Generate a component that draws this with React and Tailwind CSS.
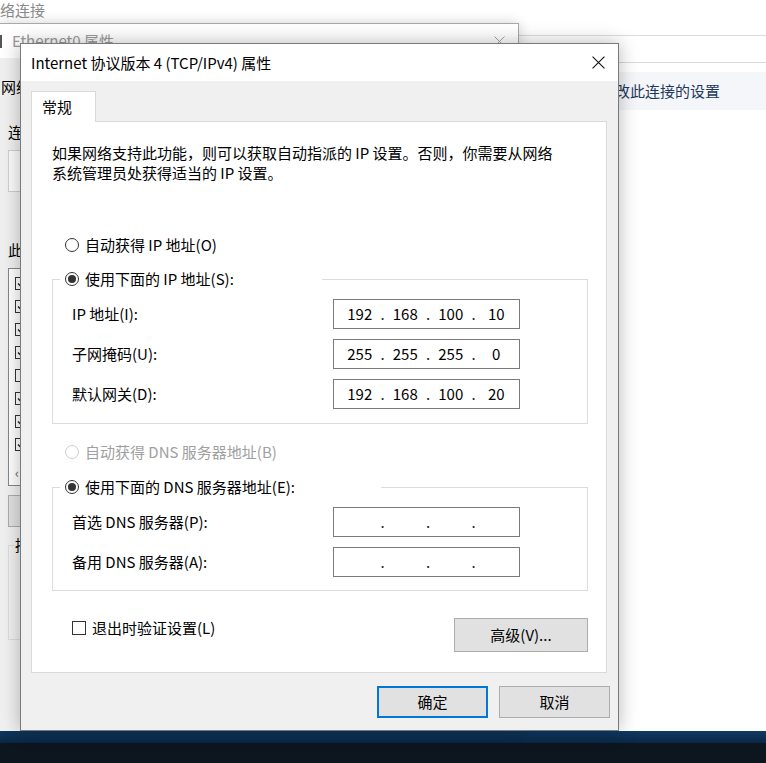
import React from "react";

function Radio({ checked, disabled }) {
  return (
    <span
      className={
        disabled
          ? "w-[14px] h-[14px] rounded-full border border-[#cccccc] bg-white flex items-center justify-center shrink-0"
          : "w-[14px] h-[14px] rounded-full border border-[#333333] bg-white flex items-center justify-center shrink-0"
      }
    >
      {checked && <span className="w-[8px] h-[8px] rounded-full bg-[#333333]" />}
    </span>
  );
}

function IpField({ parts }) {
  return (
    <div className="w-[187px] h-[30px] border border-[#7a7a7a] bg-white flex items-center pl-[3px] text-[15px] leading-[20px] text-black">
      {parts.map((p, i) => (
        <React.Fragment key={i}>
          {i > 0 && <span className="w-0 flex justify-center text-[#222222]">.</span>}
          <span className="w-[45.5px] text-center">{p}</span>
        </React.Fragment>
      ))}
    </div>
  );
}

function FieldRow({ label, parts }) {
  return (
    <div className="flex items-center h-[30px]">
      <span className="w-[261px]">{label}</span>
      <IpField parts={parts} />
    </div>
  );
}

function CloseX({ color, size }) {
  return (
    <svg width={size} height={size} viewBox="0 0 12 12" className="shrink-0">
      <path d="M0.5 0.5 L11.5 11.5 M11.5 0.5 L0.5 11.5" stroke={color} strokeWidth="1" fill="none" />
    </svg>
  );
}

function SmallCheck({ checked }) {
  return (
    <span className="w-[13px] h-[13px] border border-[#333333] bg-white flex items-center justify-center shrink-0">
      {checked && (
        <svg width="9" height="9" viewBox="0 0 9 9">
          <path d="M1 4.5 L3.5 7 L8 1.5" stroke="#222" strokeWidth="1.4" fill="none" />
        </svg>
      )}
    </span>
  );
}

export default function App() {
  const items = [true, true, true, true, false, true, true, true];
  return (
    <div className="w-[766px] h-[763px] overflow-hidden flex flex-col bg-white font-['Noto_Sans_CJK_SC','Noto_Sans',sans-serif] text-[15px] leading-[20px] text-black">
      {/* Desktop area */}
      <div className="relative h-[731px] bg-white">
        {/* Network connections window (background) */}
        <div className="absolute inset-0 flex flex-col bg-white">
          <div className="h-[36px] border-b border-[#dcdcdc]">
            <div className="ml-[-15px] text-[#8a8a8a]">网络连接</div>
          </div>
          <div className="h-[27px] border-b border-[#d9d9d9]" />
          <div className="mt-[9px] h-[38px] bg-[#f4f6f9] flex items-center">
            <span className="ml-[600px] text-[#1e395b]">更改此连接的设置</span>
          </div>
        </div>

        {/* Ethernet0 properties window (background) */}
        <div className="absolute left-0 top-[23px] w-[519px] h-[708px] border-t border-r border-[#a8a8a8] bg-[#f0f0f0] shadow-[0_0_12px_rgba(0,0,0,0.18)] flex flex-col">
          <div className="h-[34px] bg-white flex items-center">
            <span className="w-[2px] h-[13px] bg-[#555555] mr-[10px]" />
            <span className="text-[#999999]">Ethernet0 属性</span>
            <span className="ml-auto mr-[13px] flex">
              <CloseX color="#9a9a9a" size={11} />
            </span>
          </div>
          <div className="flex flex-col pl-[8px]">
            <div className="mt-[19px] ml-[-7px]">网络</div>
            <div className="mt-[25px]">连接时使用:</div>
            <div className="mt-[8px] h-[42px] w-[300px] border border-[#cfcfcf] bg-[#fbfbfb]" />
            <div className="mt-[48px]">此连接使用下列项目(O):</div>
            <div className="mt-[8px] h-[218px] w-[300px] border border-[#828790] bg-white flex flex-col pt-[3px] pl-[6px]">
              {items.map((c, i) => (
                <div key={i} className="h-[23px] flex items-center">
                  <SmallCheck checked={c} />
                </div>
              ))}
              <div className="mt-auto mb-[5px] text-[#606060] text-[13px] leading-[14px]">‹</div>
            </div>
            <div className="mt-[9px] h-[32px] w-[100px] border border-[#adadad] bg-[#e1e1e1]" />
            <div className="relative mt-[18px] h-[95px] w-[300px] border border-[#dcdcdc]">
              <span className="absolute left-[5px] top-[-11px] bg-[#f0f0f0] px-[1px]">描述</span>
            </div>
          </div>
        </div>

        {/* IPv4 properties dialog */}
        <div className="absolute left-[20px] top-[43px] w-[599px] h-[688px] border border-[#7a7a7a] bg-[#f0f0f0] shadow-[0_0_18px_rgba(0,0,0,0.28)] flex flex-col">
          {/* Title bar */}
          <div className="h-[37px] bg-white flex items-center pl-[10px]">
            <span>Internet 协议版本 4 (TCP/IPv4) 属性</span>
            <span className="ml-auto mr-[13px] flex">
              <CloseX color="#111111" size={13} />
            </span>
          </div>

          {/* Body */}
          <div className="flex flex-col pt-[10px] pl-[10px] pr-[8px]">
            {/* Tab */}
            <div className="relative z-10 -mb-[1px] w-[65px] h-[31px] bg-white border-t border-l border-r border-[#d9d9d9] flex items-center pl-[10px]">
              常规
            </div>

            {/* Panel */}
            <div className="w-[576px] border border-[#d9d9d9] bg-white flex flex-col pt-[21px] pb-[20px]">
              <div className="pl-[20px]">
                <div>如果网络支持此功能，则可以获取自动指派的 IP 设置。否则，你需要从网络</div>
                <div>系统管理员处获得适当的 IP 设置。</div>
              </div>

              <div className="mt-[52px] ml-[33px] flex items-center gap-[6px] h-[20px]">
                <Radio checked={false} />
                <span>自动获得 IP 地址(O)</span>
              </div>

              {/* Group 1 */}
              <div className="relative mt-[24px] ml-[20px] w-[536px] border border-[#dcdcdc] pt-[19px] pb-[14px] pl-[19px] flex flex-col gap-[10px]">
                <div className="absolute left-[7px] top-[-11px] w-[262px] h-[20px] bg-white flex items-center gap-[6px] pl-[5px]">
                  <Radio checked />
                  <span>使用下面的 IP 地址(S):</span>
                </div>
                <FieldRow label="IP 地址(I):" parts={["192", "168", "100", "10"]} />
                <FieldRow label="子网掩码(U):" parts={["255", "255", "255", "0"]} />
                <FieldRow label="默认网关(D):" parts={["192", "168", "100", "20"]} />
              </div>

              <div className="mt-[18px] ml-[33px] flex items-center gap-[6px] h-[20px]">
                <Radio checked={false} disabled />
                <span className="text-[#a0a0a0]">自动获得 DNS 服务器地址(B)</span>
              </div>

              {/* Group 2 */}
              <div className="relative mt-[25px] ml-[20px] w-[536px] border border-[#dcdcdc] pt-[19px] pb-[13px] pl-[19px] flex flex-col gap-[10px]">
                <div className="absolute left-[7px] top-[-11px] w-[321px] h-[20px] bg-white flex items-center gap-[6px] pl-[5px]">
                  <Radio checked />
                  <span>使用下面的 DNS 服务器地址(E):</span>
                </div>
                <FieldRow label="首选 DNS 服务器(P):" parts={["", "", "", ""]} />
                <FieldRow label="备用 DNS 服务器(A):" parts={["", "", "", ""]} />
              </div>

              {/* Bottom row */}
              <div className="mt-[27px] pl-[40px] pr-[18px] flex items-start justify-between">
                <div className="flex items-center gap-[6px] h-[20px]">
                  <span className="w-[14px] h-[14px] border border-[#333333] bg-white shrink-0" />
                  <span>退出时验证设置(L)</span>
                </div>
                <div className="w-[134px] h-[34px] border border-[#adadad] bg-[#e1e1e1] flex items-center justify-center">
                  高级(V)...
                </div>
              </div>
            </div>

            {/* OK / Cancel */}
            <div className="mt-[13px] flex justify-end gap-[11px]">
              <div className="w-[111px] h-[32px] border-2 border-[#0078d7] bg-[#e1e1e1] flex items-center justify-center">
                确定
              </div>
              <div className="w-[111px] h-[32px] border border-[#adadad] bg-[#e1e1e1] flex items-center justify-center">
                取消
              </div>
            </div>
          </div>
        </div>
      </div>

      {/* Taskbar */}
      <div className="flex-1 flex flex-col">
        <div className="h-[12px] bg-gradient-to-b from-[#0f3a63] to-[#0b2746]" />
        <div className="flex-1 bg-[#0d151f]" />
      </div>
    </div>
  );
}
